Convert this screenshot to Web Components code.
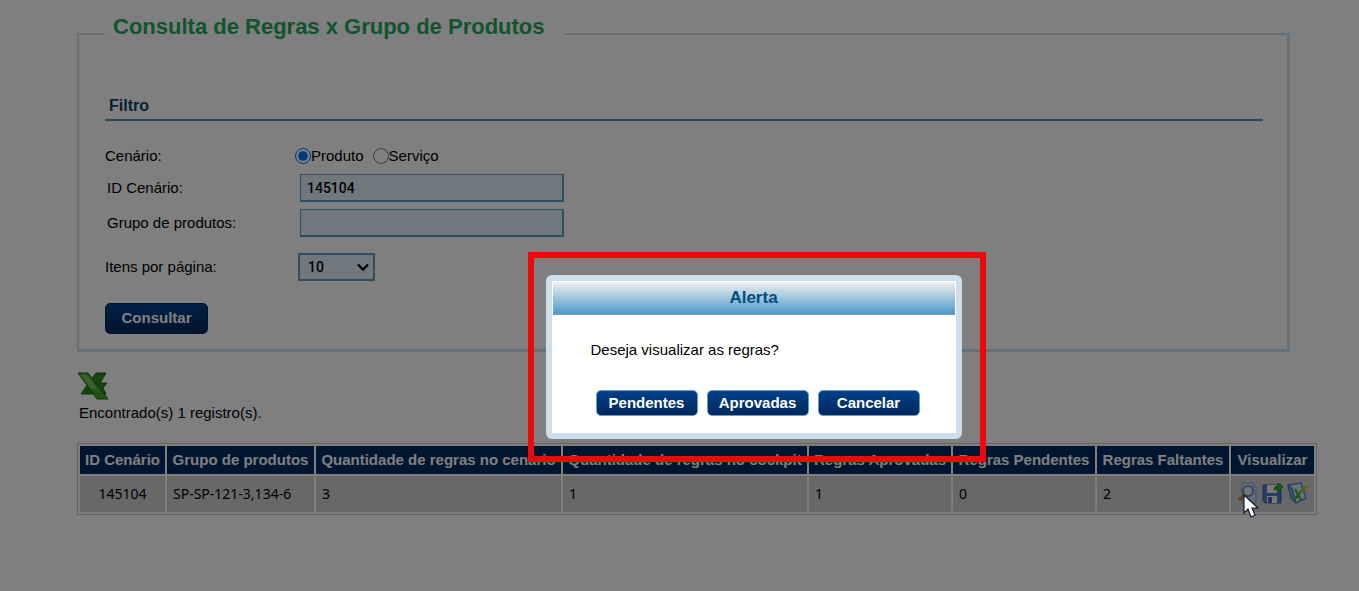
<!DOCTYPE html>
<html lang="pt-BR">
<head>
<meta charset="utf-8">
<meta name="viewport" content="width=device-width, initial-scale=1">
<title>Consulta de Regras x Grupo de Produtos</title>
<style>
  body {
    margin: 0;
    background: #fff;
    color: #000;
    font: 15px/20px "Liberation Sans", Arial, sans-serif;
  }
</style>
</head>
<body>
<rules-page></rules-page>

<template id="action-button">
  <style>
    :host { display: inline-block; }
    button {
      box-sizing: border-box;
      width: var(--button-width, 103px);
      height: var(--button-height, 31px);
      padding: 0 0 1px;
      border: var(--button-border, 1px solid #02275a);
      border-radius: 5px;
      background: linear-gradient(#00408a, #00285c);
      color: #fff;
      font: bold 15px/20px "Liberation Sans", Arial, sans-serif;
      cursor: pointer;
    }
  </style>
  <button type="button"><slot></slot></button>
</template>

<template id="filter-panel">
  <style>
    :host { display: block; }
    fieldset {
      min-width: 0;
      margin: 0;
      padding: 0 24px 15px 26px;
      border: 2px solid #d0e0ee;
      border-right-width: 3px;
      border-bottom-width: 3px;
    }
    legend {
      padding: 0 20px 14px 8px;
      color: #25a85c;
      font-size: 22px;
      font-weight: bold;
      line-height: 26px;
    }
    h2 {
      margin: 39px 0 21px;
      padding-left: 4px;
      border-bottom: 2px solid #4f94c0;
      color: #0b4570;
      font-size: 16px;
      line-height: 26px;
    }
    .row { display: flex; align-items: center; height: 28px; margin-bottom: 7px; }
    .row.first { margin-bottom: 4px; }
    .row.last { margin: 16px 0 22px; }
    .caption { box-sizing: border-box; width: 190px; flex: none; }
    .inset { width: 195px; padding-left: 2px; }
    .options { display: flex; align-items: center; gap: 9px; }
    .options label { display: flex; align-items: center; }
    input[type=radio] { width: 16px; height: 16px; margin: 0; }
    input[type=text], select {
      box-sizing: border-box;
      height: 28px;
      border: 2px solid #5b9fc8;
      background: #e2f0fa;
      color: #000;
      border-radius: 0;
      font: 500 14px/20px Roboto, "Liberation Sans", sans-serif;
    }
    input[type=text] { width: 264px; padding: 0 6px; border-width: 1px 2px 2px 1px; }
    .picker { position: relative; margin-left: 3px; display: flex; }
    select { appearance: none; width: 77px; padding: 0 8px; }
    .picker svg { position: absolute; right: 6px; top: 10px; pointer-events: none; }
  </style>
  <fieldset>
    <legend>Consulta de Regras x Grupo de Produtos</legend>
    <h2>Filtro</h2>
    <div class="row first" role="radiogroup" aria-labelledby="scenario">
      <span class="caption" id="scenario">Cenário:</span>
      <div class="options">
        <label><input type="radio" name="kind" checked>Produto</label>
        <label><input type="radio" name="kind">Serviço</label>
      </div>
    </div>
    <div class="row">
      <label class="caption inset" for="scenario-id">ID Cenário:</label>
      <input type="text" id="scenario-id" value="145104">
    </div>
    <div class="row">
      <label class="caption inset" for="group">Grupo de produtos:</label>
      <input type="text" id="group">
    </div>
    <div class="row last">
      <label class="caption" for="page-size">Itens por página:</label>
      <span class="picker">
        <select id="page-size"><option>10</option><option>20</option><option>50</option></select>
        <svg width="12" height="9" viewBox="0 0 12 9" fill="none" stroke="#000" stroke-width="2.4"><path d="M1 1.5 6 6.5 11 1.5"/></svg>
      </span>
    </div>
    <action-button>Consultar</action-button>
  </fieldset>
</template>

<template id="results-table">
  <style>
    :host { display: block; }
    .export { display: block; width: 32px; height: 28px; padding: 0; border: 0; background: none; }
    svg { display: block; }
    p { margin: 3px 0 20px 2px; }
    table {
      width: 100%;
      table-layout: fixed;
      border: 1px solid #c4c4c4;
      border-collapse: separate;
      border-spacing: 2px;
    }
    th {
      height: 28px;
      padding: 0;
      background: #012c60;
      color: #fff;
      line-height: 20px;
      white-space: nowrap;
    }
    td {
      height: 36px;
      padding: 0 6px;
      background: #d0d0d0;
      font: 14px/20px "Noto Sans", Tahoma, sans-serif;
    }
    td:first-child { text-align: center; }
    .tools { display: flex; gap: 3px; padding-bottom: 2px; }
    .tools button { width: 22px; height: 22px; padding: 0; border: 0; background: none; }
  </style>
  <button class="export" type="button" aria-label="Exportar para Excel">
    <svg width="32" height="28" viewBox="0 0 32 28">
      <path d="M19 1h10l-6 10h7l-4 5 3 6H4l7-10z" fill="#278b18" stroke="#176009"/>
      <path d="M1 1h10l20 26H20z" fill="#44a52d" stroke="#1b6811"/>
      <path d="M4 3h6l11 14h-7z" fill="#9ad584" opacity=".6"/>
    </svg>
  </button>
  <p>Encontrado(s) 1 registro(s).</p>
  <table>
    <colgroup>
      <col style="width:85px"><col style="width:147px"><col style="width:245px"><col style="width:244px">
      <col style="width:142px"><col style="width:142px"><col style="width:132px"><col>
    </colgroup>
    <thead>
      <tr>
        <th scope="col">ID Cenário</th><th scope="col">Grupo de produtos</th>
        <th scope="col">Quantidade de regras no cenário</th><th scope="col">Quantidade de regras no cockpit</th>
        <th scope="col">Regras Aprovadas</th><th scope="col">Regras Pendentes</th>
        <th scope="col">Regras Faltantes</th><th scope="col">Visualizar</th>
      </tr>
    </thead>
    <tbody>
      <tr>
        <td>145104</td><td>SP-SP-121-3,134-6</td><td>3</td><td>1</td><td>1</td><td>0</td><td>2</td>
        <td>
          <div class="tools">
            <button type="button" aria-label="Visualizar regras">
              <svg width="22" height="22" viewBox="0 0 22 22">
                <path d="M5 1h11l3 3v17H5z" fill="#c3dcf2" stroke="#7ea4d0"/>
                <path d="M16 1v4h3" fill="#fff" stroke="#7ea4d0"/>
                <path d="m8 13-6 5" stroke="#bd7a45" stroke-width="3"/>
                <circle cx="11" cy="9" r="5" fill="#dceffc" stroke="#6f90ba" stroke-width="2"/>
              </svg>
            </button>
            <button type="button" aria-label="Salvar">
              <svg width="22" height="22" viewBox="0 0 22 22">
                <path d="M1 3h18v18H3l-2-2z" fill="#4a78cc" stroke="#3a62b0"/>
                <path d="M5 3h10v8H5z" fill="#eef3fb"/>
                <path d="M5 14h10v7H5z" fill="#eef3fb"/>
                <path d="M6 15h4v6H6z" fill="#4167ac"/>
                <path d="M12 8q0-4 4-4V1l5 4-5 5V7z" fill="#38b52b" stroke="#218c19"/>
              </svg>
            </button>
            <button type="button" aria-label="Editar regras">
              <svg width="22" height="22" viewBox="0 0 22 22">
                <path d="m1 3 13-2 5 15-10 5-3-3z" fill="#cce5f7" stroke="#4b87c5" stroke-width="1.5"/>
                <path d="m1 3 4 3 4 15-5-4z" fill="#67a5df" stroke="#427ebc"/>
                <path d="m8 7 6 11M15 8 8 17" stroke="#52ac2f" stroke-width="2.5"/>
                <path d="m13 11 5-5" stroke="#a1c63d" stroke-width="2"/>
                <circle cx="19" cy="5" r="2" fill="#e9b63a"/>
              </svg>
            </button>
          </div>
        </td>
      </tr>
    </tbody>
  </table>
</template>

<template id="alert-box">
  <style>
    :host { display: block; }
    dialog {
      position: static;
      box-sizing: border-box;
      width: 416px;
      height: 164px;
      margin: 0;
      padding: 0 1px;
      overflow: hidden;
      border: 6px solid #cddfec;
      border-radius: 6px;
      background: #fff;
      color: #000;
    }
    h2 {
      margin: 0;
      border-top: 1px solid #fff;
      border-bottom: 1px solid #999;
      background: linear-gradient(#f0f0f0, #4b9aca);
      color: #034d7e;
      font-size: 17px;
      line-height: 32px;
      text-align: center;
    }
    .message { padding: 25px 38px 30px; }
    .actions { display: flex; justify-content: center; padding-left: 8px; }
  </style>
  <dialog open aria-labelledby="title">
    <h2 id="title"><slot name="title"></slot></h2>
    <div class="message"><slot></slot></div>
    <div class="actions"><slot name="actions"></slot></div>
  </dialog>
</template>

<template id="rules-page">
  <style>
    :host {
      display: block;
      box-sizing: border-box;
      min-height: 100vh;
      padding: 14px 42px 24px 77px;
    }
    filter-panel { margin: 0 27px 20px 0; }
    .backdrop { position: fixed; inset: 0; background: rgba(0, 0, 0, .5); }
    .highlight {
      position: absolute;
      left: calc(50% - 152px);
      top: 252px;
      padding: 17px 18px 17px 12px;
      border: 6px solid #ed0909;
    }
    .actions {
      display: flex;
      gap: 9px;
      --button-width: 102px;
      --button-height: 26px;
      --button-border: 1px solid #5d9fc5;
    }
    .pointer { position: absolute; right: 100px; top: 494px; pointer-events: none; }
  </style>
  <main>
    <filter-panel></filter-panel>
    <results-table></results-table>
  </main>
  <div class="backdrop"></div>
  <div class="highlight">
    <alert-box>
      <span slot="title">Alerta</span>
      Deseja visualizar as regras?
      <div class="actions" slot="actions">
        <action-button>Pendentes</action-button>
        <action-button>Aprovadas</action-button>
        <action-button>Cancelar</action-button>
      </div>
    </alert-box>
  </div>
  <svg class="pointer" width="16" height="25" viewBox="0 0 16 25" aria-hidden="true">
    <path d="M1 1v18l4-4 3 8 4-2-3-7h6z" fill="#fff" stroke="#10182c" stroke-width="1.2"/>
  </svg>
</template>

<script>
  class TemplateElement extends HTMLElement {
    constructor() {
      super();
      const template = document.getElementById(this.localName);
      this.attachShadow({ mode: "open" }).append(template.content.cloneNode(true));
    }
  }
  customElements.define("action-button", class ActionButton extends TemplateElement {});
  customElements.define("filter-panel", class FilterPanel extends TemplateElement {});
  customElements.define("results-table", class ResultsTable extends TemplateElement {});
  customElements.define("alert-box", class AlertBox extends TemplateElement {});
  customElements.define("rules-page", class RulesPage extends TemplateElement {});
</script>
</body>
</html>
